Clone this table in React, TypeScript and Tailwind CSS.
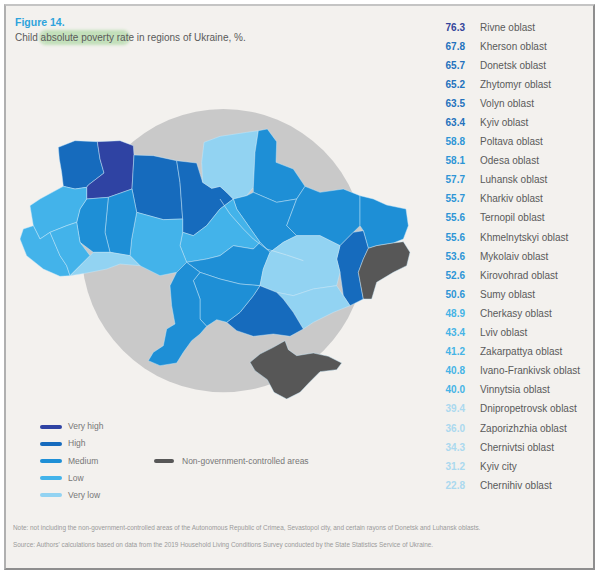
import React from 'react';

type Level = 'veryHigh' | 'high' | 'medium' | 'low' | 'veryLow' | 'ngca';

const fills: Record<Level, string> = {
  veryHigh: '#2f43a3',
  high: '#166bbd',
  medium: '#1e8fd6',
  low: '#43b3ea',
  veryLow: '#92d3f2',
  ngca: '#575757',
};

const numberColor: Record<Level, string> = {
  veryHigh: 'text-[#34449a]',
  high: 'text-[#2372bd]',
  medium: 'text-[#2d95d6]',
  low: 'text-[#45b4e6]',
  veryLow: 'text-[#abd9ef]',
  ngca: 'text-[#575757]',
};

const rows: { value: string; name: string; level: Level }[] = [
  { value: '76.3', name: 'Rivne oblast', level: 'veryHigh' },
  { value: '67.8', name: 'Kherson oblast', level: 'high' },
  { value: '65.7', name: 'Donetsk oblast', level: 'high' },
  { value: '65.2', name: 'Zhytomyr oblast', level: 'high' },
  { value: '63.5', name: 'Volyn oblast', level: 'high' },
  { value: '63.4', name: 'Kyiv oblast', level: 'high' },
  { value: '58.8', name: 'Poltava oblast', level: 'medium' },
  { value: '58.1', name: 'Odesa oblast', level: 'medium' },
  { value: '57.7', name: 'Luhansk oblast', level: 'medium' },
  { value: '55.7', name: 'Kharkiv oblast', level: 'medium' },
  { value: '55.6', name: 'Ternopil oblast', level: 'medium' },
  { value: '55.6', name: 'Khmelnytskyi oblast', level: 'medium' },
  { value: '53.6', name: 'Mykolaiv oblast', level: 'medium' },
  { value: '52.6', name: 'Kirovohrad oblast', level: 'medium' },
  { value: '50.6', name: 'Sumy oblast', level: 'medium' },
  { value: '48.9', name: 'Cherkasy oblast', level: 'low' },
  { value: '43.4', name: 'Lviv oblast', level: 'low' },
  { value: '41.2', name: 'Zakarpattya oblast', level: 'low' },
  { value: '40.8', name: 'Ivano-Frankivsk oblast', level: 'low' },
  { value: '40.0', name: 'Vinnytsia oblast', level: 'low' },
  { value: '39.4', name: 'Dnipropetrovsk oblast', level: 'veryLow' },
  { value: '36.0', name: 'Zaporizhzhia oblast', level: 'veryLow' },
  { value: '34.3', name: 'Chernivtsi oblast', level: 'veryLow' },
  { value: '31.2', name: 'Kyiv city', level: 'veryLow' },
  { value: '22.8', name: 'Chernihiv oblast', level: 'veryLow' },
];

// rough oblast outlines, in a 1200x900 box
const regions: { level: Level; pts: string }[] = [
  { level: 'high', pts: '115,145 165,125 232,128 240,180 252,222 205,258 200,265 165,270 130,262 125,220 118,180' },
  { level: 'veryHigh', pts: '232,128 300,125 340,140 342,168 336,270 265,295 200,300 200,265 205,258 252,222 240,180' },
  { level: 'high', pts: '342,168 400,170 470,185 480,250 488,360 430,362 350,340 336,270' },
  { level: 'high', pts: '470,185 530,192 548,250 575,268 600,262 620,280 640,300 600,330 560,380 520,410 488,400 488,360 480,250' },
  { level: 'veryLow', pts: '548,250 545,190 552,130 600,112 680,100 715,95 705,160 700,265 680,290 640,300 620,280 600,262 575,268' },
  { level: 'medium', pts: '715,95 742,90 770,128 768,190 820,210 855,262 830,300 770,310 700,280 700,265 705,160' },
  { level: 'medium', pts: '640,300 680,290 700,280 770,310 830,300 800,380 830,410 790,430 750,460 720,430 650,330' },
  { level: 'medium', pts: '830,300 855,262 900,280 970,270 1020,290 1020,380 1000,400 960,440 900,410 830,410 800,380' },
  { level: 'medium', pts: '1020,290 1060,300 1100,318 1158,330 1165,380 1150,420 1120,432 1070,440 1045,448 1030,395 1020,380' },
  { level: 'high', pts: '1000,400 1030,395 1045,448 1030,480 1015,520 1030,600 990,620 970,590 960,520 950,480 960,440' },
  { level: 'ngca', pts: '1045,448 1070,440 1120,432 1150,428 1170,460 1160,500 1120,520 1070,550 1055,600 1030,600 1015,520 1030,480' },
  { level: 'low', pts: '488,400 520,410 560,380 600,330 640,300 650,330 720,430 700,450 640,440 600,470 560,480 500,490 480,440' },
  { level: 'low', pts: '350,340 430,362 488,360 488,400 480,440 500,490 470,520 420,530 360,500 330,470 335,420' },
  { level: 'medium', pts: '265,295 336,270 350,340 335,420 330,470 270,460 255,400' },
  { level: 'medium', pts: '200,300 265,295 255,400 270,460 220,460 180,430 170,370 180,330' },
  { level: 'low', pts: '60,300 130,262 165,270 200,265 200,300 180,330 170,370 140,380 90,400 60,420 40,380 30,320' },
  { level: 'low', pts: '10,390 40,380 60,420 90,400 120,470 140,500 150,530 120,532 70,510 20,470 0,420' },
  { level: 'low', pts: '90,400 140,380 170,370 180,430 210,470 180,500 150,530 140,500 120,470' },
  { level: 'veryLow', pts: '180,500 210,470 220,460 270,460 330,470 360,500 300,495 260,510 200,522 150,530' },
  { level: 'medium', pts: '500,490 560,480 600,470 640,440 700,450 720,430 750,460 730,510 720,560 660,555 600,540 540,520' },
  { level: 'veryLow', pts: '750,460 790,430 830,410 900,410 960,440 950,480 960,520 950,560 880,570 820,590 770,580 720,560 730,510' },
  { level: 'veryLow', pts: '770,580 820,590 880,570 950,560 970,590 990,620 940,640 880,670 850,690 820,640 790,600' },
  { level: 'high', pts: '700,590 720,560 770,580 790,600 820,640 850,690 810,712 760,705 700,712 650,695 620,670 660,640' },
  { level: 'medium', pts: '540,520 600,540 660,555 720,560 700,590 660,640 620,670 590,662 560,682 540,660 540,600 520,545' },
  { level: 'medium', pts: '470,520 500,490 540,520 520,545 540,600 540,660 560,682 540,705 515,725 490,760 470,792 420,800 385,785 400,760 430,740 440,690 465,675 455,620 450,560' },
  { level: 'ngca', pts: '690,790 720,765 760,745 795,725 805,752 830,770 880,762 925,772 965,792 950,812 900,818 870,848 840,880 800,900 762,880 742,842 705,815' },
];

const legend: { label: string; level: Level }[] = [
  { label: 'Very high', level: 'veryHigh' },
  { label: 'High', level: 'high' },
  { label: 'Medium', level: 'medium' },
  { label: 'Low', level: 'low' },
  { label: 'Very low', level: 'veryLow' },
];

const UkraineMap = () => (
  <svg width="400" height="300" viewBox="0 0 1200 900" className="block">
    <circle cx="610" cy="455" r="425" fill="#c9c9c9" />
    {regions.map((r, i) => (
      <polygon
        key={i}
        points={r.pts}
        fill={fills[r.level]}
        stroke="rgba(200,232,250,0.55)"
        strokeWidth="2.5"
        strokeLinejoin="round"
      />
    ))}
    <polyline
      points="600,300 630,345 670,390 700,420 740,450 800,468 850,485"
      fill="none"
      stroke="rgba(215,235,245,0.6)"
      strokeWidth="3"
    />
  </svg>
);

export default function App() {
  return (
    <div className="w-[600px] h-[572px] bg-white pt-[4px] pl-[4px] font-['Liberation_Sans',Arial,sans-serif]">
      <div className="w-[591px] h-[566px] border-2 border-t-[#c4c4c4] border-l-[#b0b0b0] border-r-[#8e8e8e] border-b-[#8e8e8e] bg-[#f3f1ee] flex flex-col">
        <div className="flex">
          {/* left: title, map, legend */}
          <div className="w-[434px] pl-[9px] pt-[8px] flex flex-col">
            <div className="text-[10.5px] leading-[16px] font-bold text-[#2ea3dc]">Figure 14.</div>
            <div className="text-[10px] leading-[16px] text-[#5a5a5a]">
              Child{' '}
              <span className="bg-[#c3e0bb] rounded-[5px] shadow-[0_0_3px_2px_#c3e0bb]">absolute poverty rat</span>e in
              regions of Ukraine, %.
            </div>
            <div className="mt-[53px] ml-[5px]">
              <UkraineMap />
            </div>
            <div className="mt-[19px] ml-[25px] flex">
              <div className="w-[114px] flex flex-col">
                {legend.map((l) => (
                  <div key={l.label} className="h-[17.2px] flex items-center gap-[6px]">
                    <span className="w-[22px] h-[4px] rounded-[2px]" style={{ backgroundColor: fills[l.level] }} />
                    <span className="text-[8.5px] text-[#777]">{l.label}</span>
                  </div>
                ))}
              </div>
              <div className="pt-[34.4px]">
                <div className="h-[17.2px] flex items-center gap-[8px]">
                  <span className="w-[20px] h-[4px] rounded-[2px] bg-[#575757]" />
                  <span className="text-[8.5px] text-[#777]">Non-government-controlled areas</span>
                </div>
              </div>
            </div>
          </div>

          {/* right: ranked list */}
          <div className="pt-[11.5px] flex flex-col">
            {rows.map((r) => (
              <div key={r.name} className="h-[19.1px] flex items-center">
                <span className={`w-[25px] text-right text-[10px] font-bold ${numberColor[r.level]}`}>{r.value}</span>
                <span className="ml-[15px] text-[10px] text-[#5a5a5a] whitespace-nowrap">{r.name}</span>
              </div>
            ))}
          </div>
        </div>

        <div className="mt-[15px] pl-[7px] text-[6.4px] leading-[17px] text-[#9a9a9a] whitespace-nowrap">
          <div>
            Note: not including the non-government-controlled areas of the Autonomous Republic of Crimea, Sevastopol city, and certain rayons of Donetsk and Luhansk oblasts.
          </div>
          <div>
            Source: Authors' calculations based on data from the 2019 Household Living Conditions Survey conducted by the State Statistics Service of Ukraine.
          </div>
        </div>
      </div>
    </div>
  );
}
